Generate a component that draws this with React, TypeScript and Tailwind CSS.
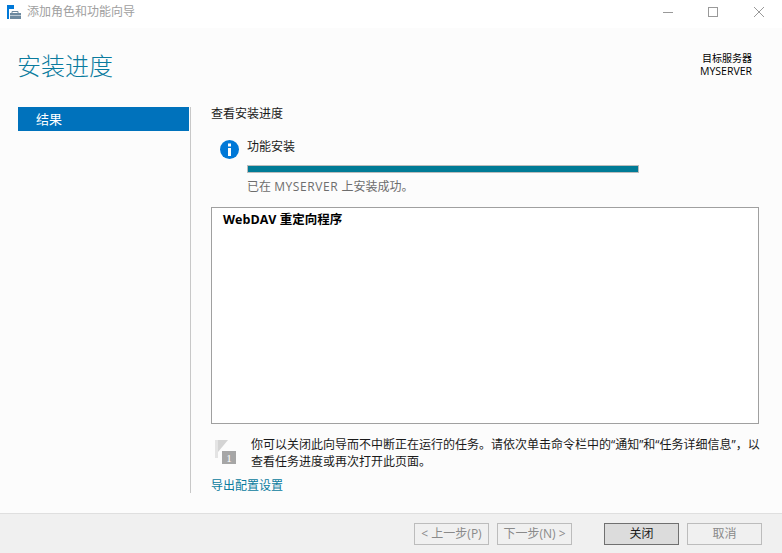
const cjk = "font-['Open_Sans','Noto_Sans_CJK_SC',sans-serif]"

function FooterButton({ label, primary, disabled, className }: { label: string; primary?: boolean; disabled?: boolean; className?: string }) {
  return (
    <button
      className={`flex h-[22px] w-[75px] items-center justify-center border text-[12px] leading-none ${
        primary
          ? "border-[#707070] bg-[#dcdcdc] text-[#1a1a1a]"
          : "border-[#bcbcbc] bg-[#f0f0f0] text-[#8a8a8a]"
      } ${className ?? ""}`}
      disabled={disabled}
    >
      {label}
    </button>
  )
}

export default function App() {
  return (
    <div className={`flex h-[553px] w-[782px] flex-col overflow-hidden bg-[#fcfcfc] ${cjk}`}>
      {/* TITLE BAR */}
      <div className="flex h-[28px] shrink-0 items-center bg-white pb-[4px]">
        <svg className="ml-[7px]" width="14" height="14" viewBox="0 0 14 14">
          <rect x="0" y="0" width="7" height="4" fill="#0078d7" />
          <rect x="0" y="4" width="2" height="10" fill="#0078d7" />
          <path d="M5 8V6.5H11V8" fill="none" stroke="#6d8aa0" />
          <rect x="3" y="8" width="11" height="6" fill="#6d8aa0" />
          <rect x="3" y="10" width="11" height="1" fill="#b9c8d3" />
        </svg>
        <span className="ml-[6px] text-[12px] leading-none text-[#a0a0a0]">添加角色和功能向导</span>
        <div className="ml-auto flex items-center">
          <svg width="10" height="10" viewBox="0 0 10 10" className="mr-[35px]">
            <path d="M0 5.5H10" stroke="#999999" />
          </svg>
          <svg width="10" height="10" viewBox="0 0 10 10" className="mr-[36px]">
            <rect x="0.5" y="0.5" width="9" height="9" fill="none" stroke="#999999" />
          </svg>
          <svg width="10" height="10" viewBox="0 0 10 10" className="mr-[18px]">
            <path d="M0 0L10 10M10 0L0 10" stroke="#999999" />
          </svg>
        </div>
      </div>

      {/* HEADER */}
      <div className="flex h-[79px] shrink-0 justify-between pl-[18px] pr-[30px]">
        <h1 className="-ml-px mt-[22px] text-[24px] leading-[32px] font-light text-[#0a7b9e]">安装进度</h1>
        <div className="mt-[24px] text-right text-[10px] leading-[13px] text-black">
          <div>目标服务器</div>
          <div className="text-[10.5px]">MYSERVER</div>
        </div>
      </div>

      <div className="flex min-h-0 flex-1">
        {/* SIDEBAR */}
        <div className="ml-[18px] w-[171px] shrink-0">
          <div className="flex h-[24px] items-center bg-[#0072bc] pl-[18px] text-[13px] leading-none text-white">结果</div>
        </div>

        {/* CONTENT */}
        <div className="ml-px mb-[20px] flex w-[572px] flex-col border-l border-[#c8c8c8] pl-[20px]">
          <div className="mt-[-1px] text-[12px] leading-[16px] text-[#1a1a1a]">查看安装进度</div>
          <div className="mt-[17px] flex">
            <svg className="ml-[9px] mt-[1px] shrink-0" width="19" height="19" viewBox="0 0 19 19">
              <circle cx="9.5" cy="9.5" r="9.5" fill="#0078d7" />
              <rect x="8" y="3.5" width="3" height="3" fill="#ffffff" />
              <rect x="8" y="8" width="3" height="8" fill="#ffffff" />
            </svg>
            <div className="ml-[8px] w-[392px]">
              <div className="text-[12px] leading-[16px] text-[#1a1a1a]">功能安装</div>
              <div className="mt-[10px] h-[8px] border border-[#bcbcbc] bg-[#007b96]" />
              <div className="mt-[6px] text-[12px] leading-[16px] text-[#6d6d6d]">
                已在 <span className="tracking-[0.6px]">MYSERVER</span> 上安装成功。
              </div>
            </div>
          </div>

          <div className="mt-[12px] h-[217px] w-[548px] shrink-0 border border-[#a0a0a0] bg-white px-[11px] pt-[4px] text-[12.5px] leading-[16px] font-bold text-black">
            WebDAV 重定向程序
          </div>

          <div className="mt-[12px] flex">
            <svg className="ml-[4px] mt-[4px] shrink-0" width="21" height="24" viewBox="0 0 21 24">
              <rect x="0" y="0" width="3" height="18" fill="#e4e4e4" />
              <path d="M3 0H13L3 12Z" fill="#d4d4d4" />
              <rect x="7" y="11" width="14" height="13" fill="#a6a6a6" />
              <text x="14" y="21.5" textAnchor="middle" fontSize="11" fontFamily="'Liberation Serif', serif" fill="#ffffff">1</text>
            </svg>
            <p className="ml-[15px] w-[512px] text-[12px] leading-[17px] text-[#1a1a1a]">
              你可以关闭此向导而不中断正在运行的任务。请依次单击命令栏中的“通知”和“任务详细信息”，以查看任务进度或再次打开此页面。
            </p>
          </div>

          <a className="mt-[8px] mb-[-1px] text-[12px] leading-[16px] text-[#0a7b9e]">导出配置设置</a>
        </div>
      </div>

      {/* FOOTER */}
      <div className="flex h-[40px] shrink-0 items-center border-t border-[#dfdfdf] bg-[#f0f0f0] pl-[414px]">
        <FooterButton label="< 上一步(P)" disabled />
        <FooterButton label="下一步(N) >" disabled className="ml-[8px]" />
        <FooterButton label="关闭" primary className="ml-[32px]" />
        <FooterButton label="取消" disabled className="ml-[8px]" />
      </div>
    </div>
  )
}
